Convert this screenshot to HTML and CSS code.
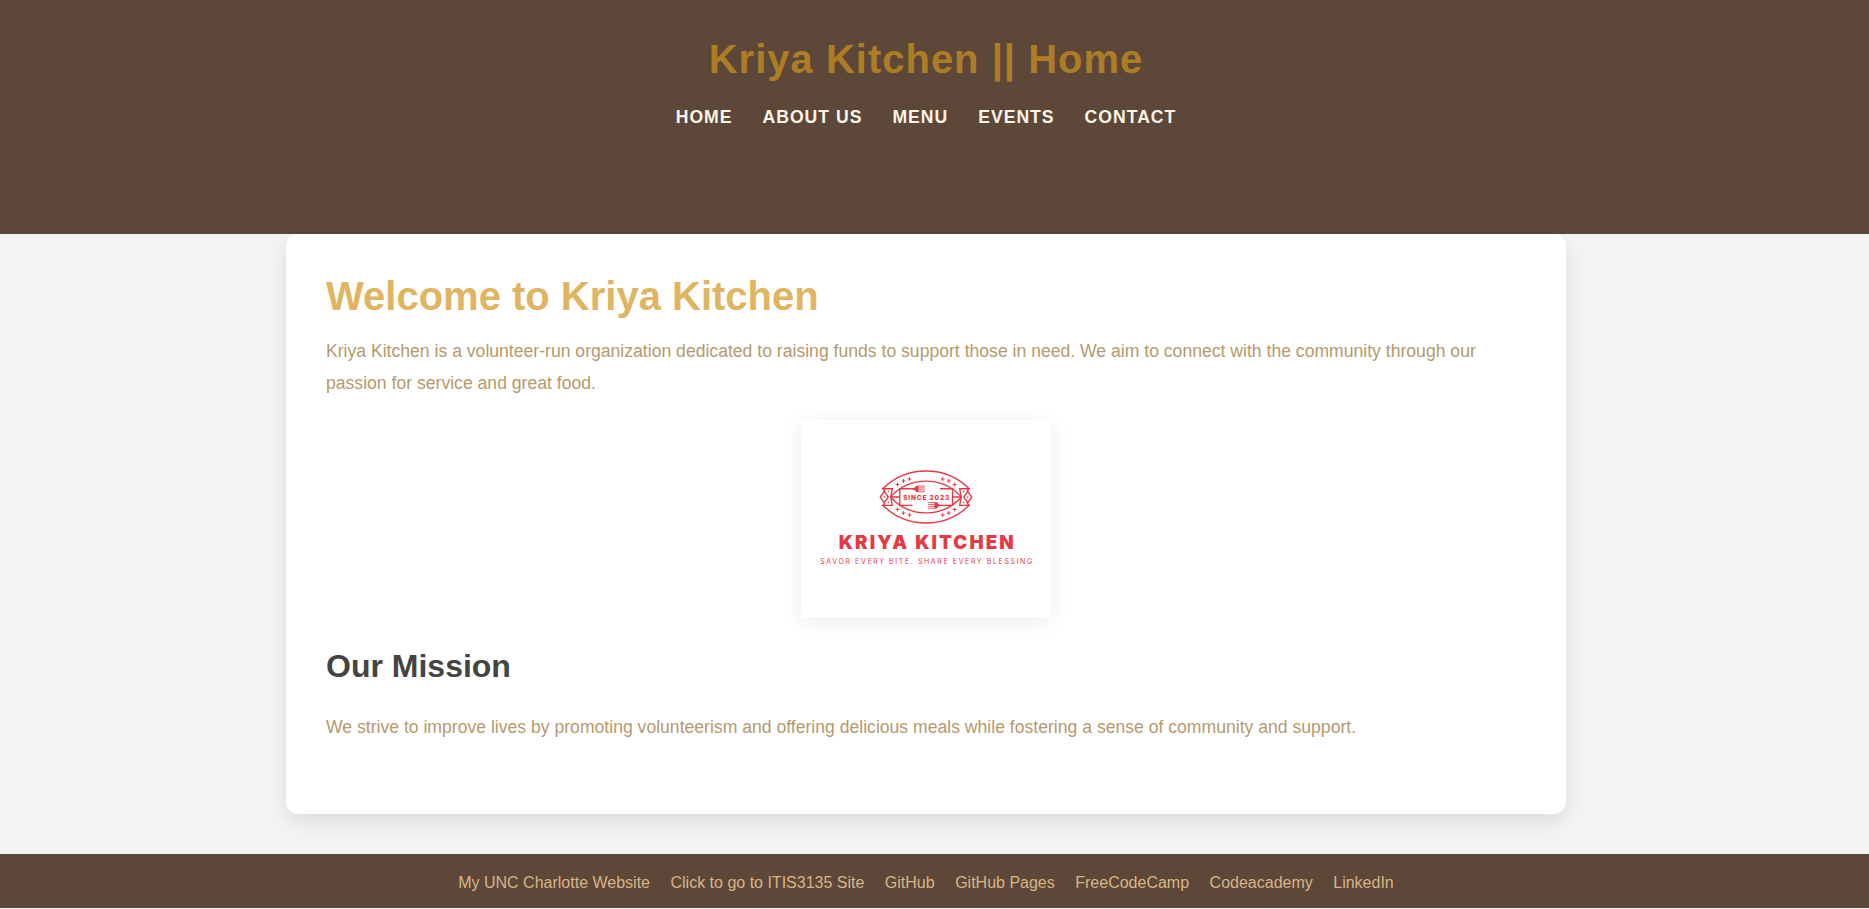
FILE: index.html
```html
<!DOCTYPE html>
<html lang="en">
<head>
<meta charset="utf-8">
<title>Kriya Kitchen || Home</title>
<link rel="stylesheet" href="styles.css">
</head>
<body>
<header class="site-header">
  <h1 class="site-title">Kriya Kitchen || Home</h1>
  <nav class="main-nav">
    <a href="#">HOME</a>
    <a href="#">ABOUT US</a>
    <a href="#">MENU</a>
    <a href="#">EVENTS</a>
    <a href="#">CONTACT</a>
  </nav>
</header>
<main class="card">
  <h1 class="welcome">Welcome to Kriya Kitchen</h1>
  <p class="copy">Kriya Kitchen is a volunteer-run organization dedicated to raising funds to support those in need. We aim to connect with the community through our passion for service and great food.</p>
  <svg class="logo" viewBox="0 0 250 198" role="img" aria-label="Kriya Kitchen logo">
    <defs>
      <path id="plus" d="M-1.900 0H1.900M0-1.900V1.900"/>
      <g id="half">
        <path d="M81.800 68.700A61.600 61.600 0 0 1 168.200 68.700"/>
        <path d="M89.500 77A47.500 47.500 0 0 1 160.500 77"/>
      </g>
      <g id="side">
        <path d="M84 71L81.800 68.700H91.300L89.800 77L91.300 85.300H81.800L84 83M89.500 77H98.800"/>
        <path d="M83.300 71.300L87.300 77L83.300 82.700L79.300 77Z"/>
        <path class="logo-fill" d="M82.300 77l1-1 1 1-1 1zM86.300 71.600l1-1 1 1-1 1zM86.300 82.400l1-1 1 1-1 1z"/>
      </g>
    </defs>
    <g class="logo-line">
      <use href="#half"/>
      <use href="#half" transform="matrix(1 0 0 -1 0 154)"/>
      <use href="#side"/>
      <use href="#side" transform="matrix(-1 0 0 1 250 0)"/>
      <path d="M112 68.700H98.800V85.300H111.500M139 68.700H151.500V85.300H138"/>
      <path d="M124 66H117M124 67.900H117M124 69.800H117M124 71.700H117M127 82.500H134M127 84.400H134M127 86.300H134M127 88.200H134" stroke-width=".8"/>
      <g stroke-width="1">
        <use href="#plus" x="96.500" y="64.500"/><use href="#plus" x="102.500" y="61"/><use href="#plus" x="108.500" y="59"/>
        <use href="#plus" x="141.700" y="59"/><use href="#plus" x="147.700" y="61"/><use href="#plus" x="153.700" y="64.500"/>
        <use href="#plus" x="96.500" y="89.500"/><use href="#plus" x="102.500" y="93"/><use href="#plus" x="108.500" y="95"/>
        <use href="#plus" x="141.700" y="95"/><use href="#plus" x="147.700" y="93"/><use href="#plus" x="153.700" y="89.500"/>
      </g>
    </g>
    <path class="logo-fill" d="M117.500 65.700V72H115.500Q114 69.700 111.500 69.300V68.200Q114 68 115.500 65.700ZM133.500 82.200V88.500H136Q136.800 86.200 139 86V84.800Q137 84.600 136 82.200Z"/>
    <text class="logo-since" x="125.200" y="79.900" textLength="46">SINCE 2023</text>
    <text class="logo-name" x="125.200" y="128.800" textLength="175">KRIYA KITCHEN</text>
    <text class="logo-tag" x="125.200" y="143.700" textLength="212">SAVOR EVERY BITE. SHARE EVERY BLESSING</text>
  </svg>
  <h2 class="mission">Our Mission</h2>
  <p class="copy">We strive to improve lives by promoting volunteerism and offering delicious meals while fostering a sense of community and support.</p>
</main>
<footer class="site-footer">
  <a href="#">My UNC Charlotte Website</a>
  <a href="#">Click to go to ITIS3135 Site</a>
  <a href="#">GitHub</a>
  <a href="#">GitHub Pages</a>
  <a href="#">FreeCodeCamp</a>
  <a href="#">Codeacademy</a>
  <a href="#">LinkedIn</a>
</footer>
</body>
</html>
```
FILE: styles.css
```css
* { box-sizing: border-box; }
html { background: #f4f4f4; }
body {
  margin: 0;
  height: 909px;
  overflow: hidden;
  font-family: "Liberation Sans", Arial, sans-serif;
  background: #f4f4f4;
}
a { text-decoration: none; }
.site-header {
  height: 234px;
  padding: 36px 17px 0 0;
  background: #5c4739;
  text-align: center;
}
.site-title {
  margin: 0;
  font-size: 40px;
  line-height: 46px;
  letter-spacing: 1px;
  color: #ad7d25;
}
.main-nav {
  display: flex;
  justify-content: center;
  gap: 30px;
  margin-top: 25px;
}
.main-nav a {
  font-size: 17.6px;
  line-height: 20px;
  font-weight: bold;
  letter-spacing: 1px;
  color: #fdf5e6;
}
.card {
  width: 1280px;
  height: 580px;
  margin: 0 0 40px 286px;
  padding: 40px;
  background: #fff;
  border-radius: 12px;
  box-shadow: 0 8px 20px rgba(0, 0, 0, .1);
}
.welcome {
  margin: 0 0 17px;
  font-size: 40px;
  line-height: 44px;
  color: #dfb562;
}
.copy {
  margin: 0;
  font-size: 17.6px;
  line-height: 32px;
  color: #b59a6d;
}
.logo {
  display: block;
  width: 250px;
  height: 198px;
  margin: 21px auto 30px;
  background: #fff;
  box-shadow: 0 4px 20px rgba(0, 0, 0, .08);
}
.logo-line { fill: none; stroke: #e63946; stroke-width: 1.35; }
.logo-fill { fill: #e63946; stroke: none; }
.logo text { fill: #e63946; text-anchor: middle; font-family: Inter, sans-serif; }
.logo-since { font-size: 6.500px; font-weight: 800; }
.logo-name { font-size: 18.800px; font-weight: 900; }
.logo-tag { font-size: 7px; }
.mission {
  margin: 0 0 26px;
  font-size: 32px;
  line-height: 37px;
  color: #444;
}
.site-footer {
  display: flex;
  justify-content: center;
  gap: 20.5px;
  height: 54px;
  padding: 20px 17px 0 0;
  background: #5c4739;
}
.site-footer a {
  font-size: 16px;
  line-height: 18px;
  color: #d9b586;
}
```
